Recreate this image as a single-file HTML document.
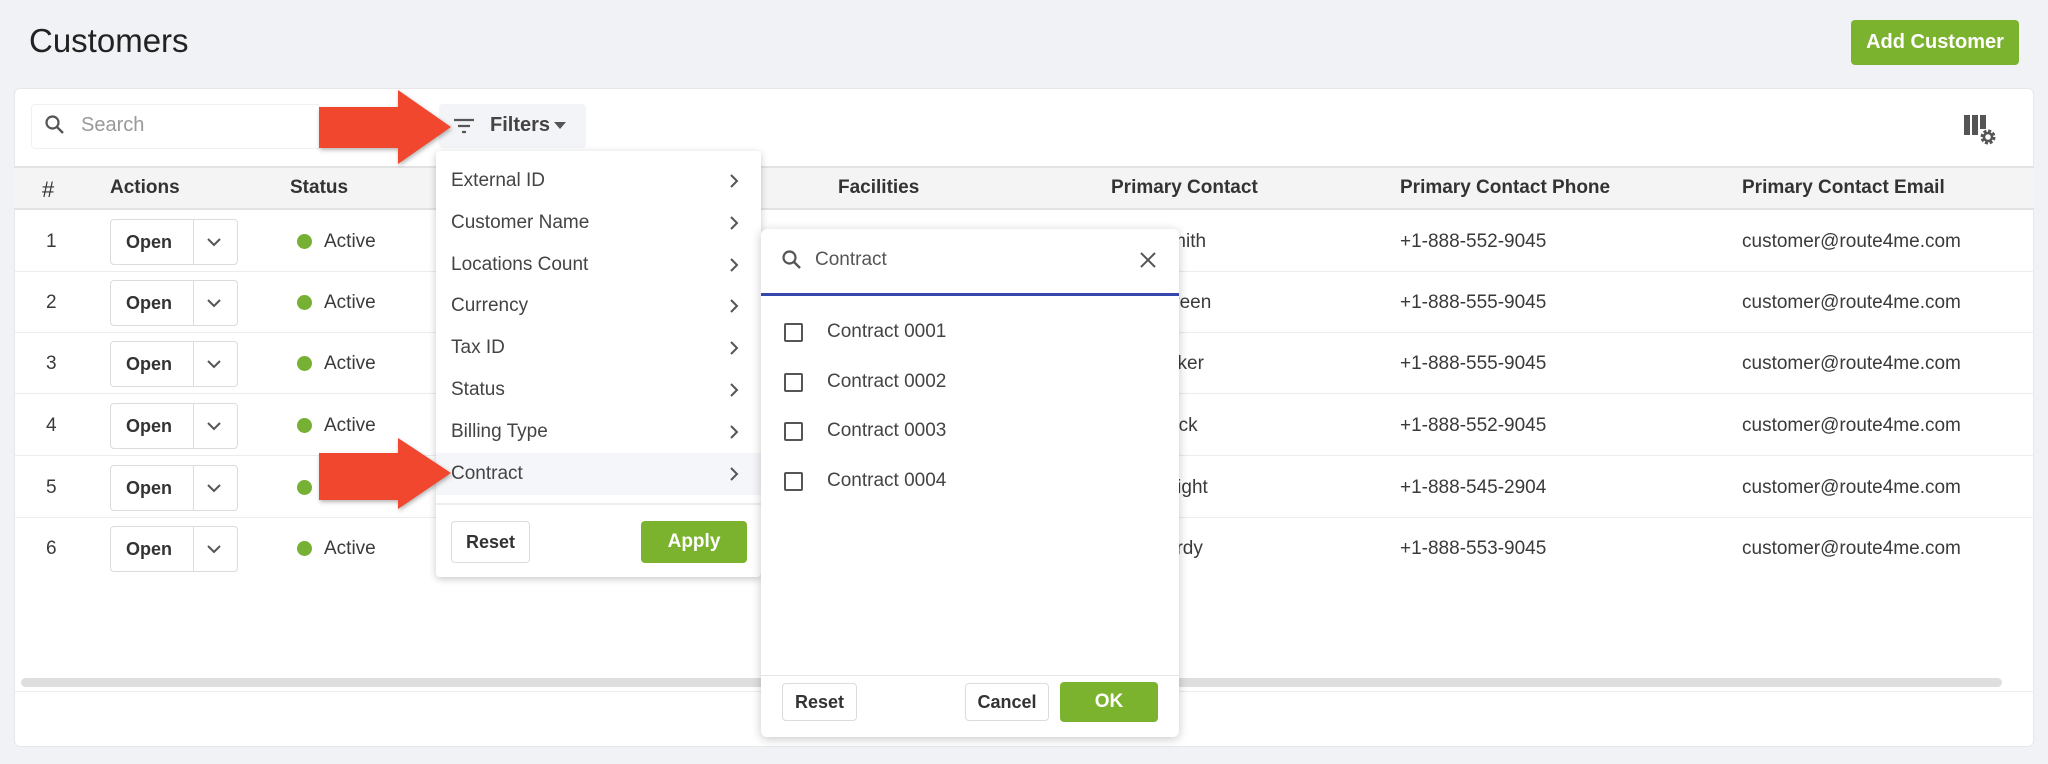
<!DOCTYPE html>
<html><head><meta charset="utf-8">
<style>
*{box-sizing:border-box;margin:0;padding:0}
body{width:2048px;height:764px;background:#f1f2f6;font-family:"Liberation Sans",sans-serif;color:#333;position:relative;overflow:hidden}
.a{position:absolute}
.t{font-size:19px;color:#3a3a3a;white-space:nowrap}
.th{font-size:19px;color:#333;font-weight:bold;white-space:nowrap}
.btn{position:absolute;border:1px solid #dcdcdc;border-radius:4px;background:#fff;font-size:18px;font-weight:bold;color:#333;display:flex;align-items:center;justify-content:center}
.gbtn{position:absolute;background:#7cb32e;border-radius:4px;color:#fff;font-size:19px;font-weight:bold;display:flex;align-items:center;justify-content:center}
.row{position:absolute;left:14px;width:2020px;height:61px;border-bottom:1px solid #ececec}
.dot{position:absolute;width:15px;height:15px;border-radius:50%;background:#76b135}
.mi{position:absolute;left:451px;font-size:19px;color:#444;white-space:nowrap}
.chev{position:absolute;left:728px}
.cb{position:absolute;left:784px;width:19px;height:19px;border:2px solid #555;border-radius:2px}
</style></head><body>
<div class="a" style="left:29px;top:22px;font-size:33px;color:#222">Customers</div>
<div class="gbtn" style="left:1851px;top:20px;width:168px;height:45px;font-size:20px">Add Customer</div>

<div class="a" style="left:14px;top:88px;width:2020px;height:659px;background:#fff;border:1px solid #e6e7ea;border-radius:6px"></div>
<div class="a" style="left:31px;top:104px;width:290px;height:45px;border:1px solid #f0f0f0;border-radius:4px"></div>
<svg class="a" style="left:43px;top:113px" width="24" height="24" viewBox="0 0 24 24"><circle cx="9.5" cy="9.5" r="6" fill="none" stroke="#555" stroke-width="2.2"/><path d="M14 14l6 6" stroke="#555" stroke-width="2.4"/></svg>
<div class="a" style="left:81px;top:114px;font-size:20px;color:#999">Search</div>
<div class="a" style="left:439px;top:104px;width:147px;height:44px;background:#f3f4f7;border-radius:4px"></div>
<svg class="a" style="left:452px;top:115px" width="24" height="22" viewBox="0 0 24 22"><path d="M2 5h20M6 11h12M10 17h4" stroke="#555" stroke-width="2.2"/></svg>
<div class="a" style="left:490px;top:114px;font-size:20px;font-weight:bold;color:#444">Filters</div>
<svg class="a" style="left:554px;top:122px" width="12" height="8"><path d="M0 0h12L6 7z" fill="#555"/></svg>
<svg class="a" style="left:1962px;top:113px" width="36" height="34" viewBox="0 0 36 34"><rect x="2" y="2" width="6" height="20" fill="#555"/><rect x="10" y="2" width="6" height="20" fill="#555"/><rect x="18" y="2" width="6" height="14" fill="#555"/><circle cx="26" cy="24" r="6" fill="none" stroke="#555" stroke-width="3" stroke-dasharray="3 1.7"/><circle cx="26" cy="24" r="4" fill="none" stroke="#555" stroke-width="2.5"/></svg>

<div class="a" style="left:14px;top:166px;width:2020px;height:44px;background:#f4f4f4;border-top:2px solid #e2e2e2;border-bottom:2px solid #e2e2e2"></div>
<div class="th a" style="left:42px;top:177px;font-weight:normal;font-size:22px">#</div>
<div class="th a" style="left:110px;top:177px">Actions</div>
<div class="th a" style="left:290px;top:177px">Status</div>
<div class="th a" style="left:838px;top:177px">Facilities</div>
<div class="th a" style="left:1111px;top:177px">Primary Contact</div>
<div class="th a" style="left:1400px;top:177px">Primary Contact Phone</div>
<div class="th a" style="left:1742px;top:177px">Primary Contact Email</div>

<div id="rows"></div>
<script>
var ys=[211,272,333,395,457,518],names=["Jane Smith","Mark Green","Paul Baker","Lisa Black","Alex Wright","Tom Hardy"],ph=["+1-888-552-9045","+1-888-555-9045","+1-888-555-9045","+1-888-552-9045","+1-888-545-2904","+1-888-553-9045"],h="";
for(var i=0;i<6;i++){var y=ys[i];
h+='<div class="row" style="top:'+y+'px;'+(i==5?'border:none':'')+'"></div>';
h+='<div class="t a" style="left:46px;top:'+(y+20)+'px">'+(i+1)+'</div>';
h+='<div class="btn" style="left:110px;top:'+(y+8)+'px;width:128px;height:46px;justify-content:flex-start;padding-left:15px">Open</div>';
h+='<div class="a" style="left:193px;top:'+(y+9)+'px;width:1px;height:44px;background:#dcdcdc"></div>';
h+='<svg class="a" style="left:207px;top:'+(y+27)+'px" width="14" height="9"><path d="M1 1l6 6 6-6" fill="none" stroke="#555" stroke-width="2"/></svg>';
h+='<div class="dot" style="left:297px;top:'+(y+23)+'px"></div>';
h+='<div class="t a" style="left:324px;top:'+(y+20)+'px">Active</div>';
h+='<div class="t a" style="left:1111px;top:'+(y+20)+'px">'+names[i]+'</div>';
h+='<div class="t a" style="left:1400px;top:'+(y+20)+'px">'+ph[i]+'</div>';
h+='<div class="t a" style="left:1742px;top:'+(y+20)+'px">customer@route4me.com</div>';}
document.getElementById("rows").innerHTML=h;
</script>
<div class="a" style="left:21px;top:678px;width:1981px;height:9px;background:#dedede;border-radius:5px"></div>
<div class="a" style="left:14px;top:691px;width:2020px;height:1px;background:#ececec"></div>

<div class="a" style="left:436px;top:151px;width:325px;height:426px;background:#fff;border-radius:4px;box-shadow:0 2px 8px rgba(0,0,0,.22)"></div>
<div class="a" style="left:436px;top:453px;width:325px;height:42px;background:#f5f6fa"></div>
<div id="menu"></div>
<script>
var it=["External ID","Customer Name","Locations Count","Currency","Tax ID","Status","Billing Type","Contract"],m="";
for(var i=0;i<8;i++){var y=170+i*41.8;
m+='<div class="mi" style="top:'+(y)+'px">'+it[i]+'</div>';
m+='<svg class="chev" style="top:'+(y+3)+'px" width="12" height="16"><path d="M3 2l6 6-6 6" fill="none" stroke="#555" stroke-width="2"/></svg>';}
document.getElementById("menu").innerHTML=m;
</script>
<div class="a" style="left:436px;top:503px;width:325px;height:2px;background:#eee"></div>
<div class="btn" style="left:451px;top:521px;width:79px;height:42px">Reset</div>
<div class="gbtn" style="left:641px;top:521px;width:106px;height:42px">Apply</div>

<div class="a" style="left:761px;top:229px;width:418px;height:508px;background:#fff;border-radius:6px;box-shadow:0 2px 10px rgba(0,0,0,.22)"></div>
<svg class="a" style="left:780px;top:248px" width="24" height="24" viewBox="0 0 24 24"><circle cx="9.5" cy="9.5" r="6" fill="none" stroke="#555" stroke-width="2.2"/><path d="M14 14l6 6" stroke="#555" stroke-width="2.4"/></svg>
<div class="a" style="left:815px;top:249px;font-size:19px;color:#555">Contract</div>
<svg class="a" style="left:1139px;top:251px" width="18" height="18"><path d="M2 2l14 14M16 2L2 16" stroke="#555" stroke-width="2"/></svg>
<div class="a" style="left:761px;top:293px;width:418px;height:3px;background:#3546ad"></div>
<div class="cb" style="top:323px"></div><div class="mi" style="left:827px;top:321px">Contract 0001</div>
<div class="cb" style="top:373px"></div><div class="mi" style="left:827px;top:371px">Contract 0002</div>
<div class="cb" style="top:422px"></div><div class="mi" style="left:827px;top:420px">Contract 0003</div>
<div class="cb" style="top:472px"></div><div class="mi" style="left:827px;top:470px">Contract 0004</div>
<div class="a" style="left:761px;top:675px;width:418px;height:1px;background:#e6e6e6"></div>
<div class="btn" style="left:782px;top:683px;width:75px;height:38px">Reset</div>
<div class="btn" style="left:965px;top:683px;width:84px;height:38px">Cancel</div>
<div class="gbtn" style="left:1060px;top:682px;width:98px;height:40px">OK</div>

<svg class="a" style="left:310px;top:85px;filter:drop-shadow(1px 2px 2px rgba(0,0,0,.3))" width="150" height="85"><path d="M9 22h79V5l53 37-53 37V63H9z" fill="#f2472f"/></svg>
<svg class="a" style="left:310px;top:430px;filter:drop-shadow(1px 2px 2px rgba(0,0,0,.3))" width="150" height="85"><path d="M9 23h79V8l53 35-53 36V70H9z" fill="#f2472f"/></svg>
</body></html>
